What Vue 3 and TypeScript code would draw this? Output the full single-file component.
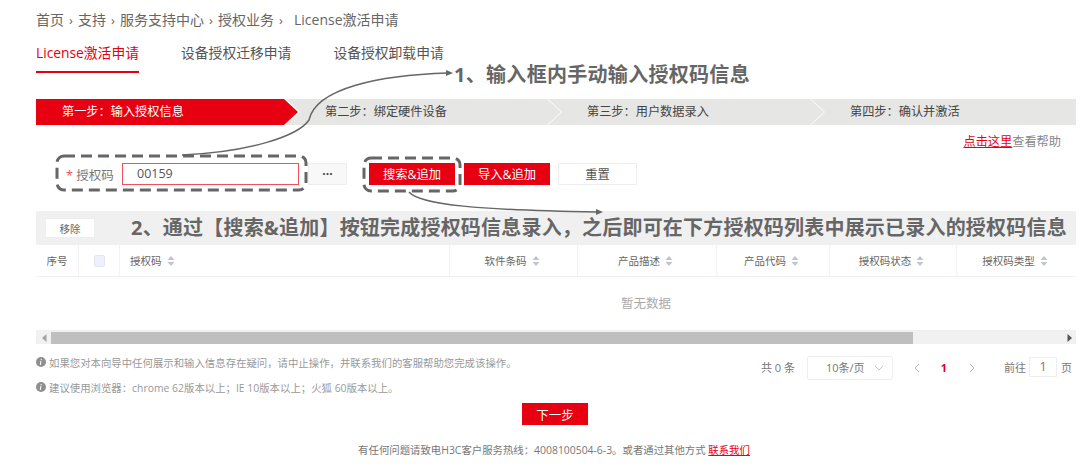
<script setup lang="ts">
const COLON = '\uFF1A'
const COMMA = '\uFF0C'
const SEMI = '\uFF1B'
const crumbs: string[] = ['首页', '支持', '服务支持中心', '授权业务']
const tabs: string[] = ['License激活申请', '设备授权迁移申请', '设备授权卸载申请']
const steps: string[] = [
  `第一步${COLON}输入授权信息`,
  `第二步${COLON}绑定硬件设备`,
  `第三步${COLON}用户数据录入`,
  `第四步${COLON}确认并激活`
]
const cols: string[] = ['软件条码', '产品描述', '产品代码', '授权码状态', '授权码类型']
const notes: string[] = [
  `如果您对本向导中任何展示和输入信息存在疑问${COMMA}请中止操作${COMMA}并联系我们的客服帮助您完成该操作。`,
  `建议使用浏览器${COLON}chrome 62版本以上${SEMI}IE 10版本以上${SEMI}火狐 60版本以上。`
]
const note2 = `2、通过【搜索&追加】按钮完成授权码信息录入${COMMA}之后即可在下方授权码列表中展示已录入的授权码信息`
const footText = `有任何问题请致电H3C客户服务热线${COLON}4008100504-6-3。或者通过其他方式 `
</script>

<template>
  <div class="page">
    <nav class="crumbs">
      <template v-for="c in crumbs" :key="c">
        <span>{{ c }}</span><span class="sep">›</span>
      </template>
      <span class="last">License激活申请</span>
    </nav>

    <div class="tabs">
      <span v-for="(t, i) in tabs" :key="t" class="tab" :class="{ on: i === 0 }">{{ t }}</span>
    </div>

    <div class="steps">
      <div v-for="(s, i) in steps" :key="s" class="step" :class="`s${i}`">{{ s }}</div>
    </div>

    <div class="help"><a class="red-link">点击这里</a>查看帮助</div>

    <div class="form">
      <label class="lbl"><i>*</i> 授权码</label>
      <div class="input">00159</div>
      <button class="more">···</button>
      <button class="btn red first">搜索&amp;追加</button>
      <button class="btn red second">导入&amp;追加</button>
      <button class="btn plain">重置</button>
    </div>

    <section class="table">
      <div class="toolbar">
        <button class="remove">移除</button>
        <strong class="note2">{{ note2 }}</strong>
      </div>
      <div class="head">
        <div class="cell center">序号</div>
        <div class="cell center"><span class="check"></span></div>
        <div class="cell left">授权码
          <svg class="sort" viewBox="0 0 8 12" width="8" height="12"><path d="M4 1 7.5 5H.5zM4 11 .5 7h7z" /></svg>
        </div>
        <div v-for="c in cols" :key="c" class="cell center shift">{{ c }}
          <svg class="sort" viewBox="0 0 8 12" width="8" height="12"><path d="M4 1 7.5 5H.5zM4 11 .5 7h7z" /></svg>
        </div>
      </div>
      <div class="empty">暂无数据</div>
      <div class="scroll">
        <svg class="sl" viewBox="0 0 5 8" width="5" height="8"><path d="M4.5 0v8L0 4z" /></svg>
        <div class="thumb"></div>
        <svg class="sr" viewBox="0 0 5 8" width="5" height="8"><path d="M.5 0v8L5 4z" /></svg>
      </div>
    </section>

    <div class="bottom">
      <div class="notes">
        <p v-for="n in notes" :key="n">
          <svg viewBox="0 0 10 10" width="10" height="10"><circle cx="5" cy="5" r="5" fill="#8f8f8f" /><path d="M5.9 2.1 5.6 3.2H4.5l.3-1.1zM5.4 4 4.8 7.9H3.8L4.4 4z" fill="#fff" /></svg>
          <span>{{ n }}</span>
        </p>
      </div>
      <div class="pager">
        <span class="total">共 0 条</span>
        <div class="select">10条/页
          <svg viewBox="0 0 10 6" width="10" height="6"><path d="M1 1l4 4 4-4" fill="none" stroke="#c0c4cc" /></svg>
        </div>
        <svg class="pg prev" viewBox="0 0 6 10" width="6" height="10"><path d="M5 1 1 5l4 4" fill="none" stroke="#b4b4b4" /></svg>
        <b class="cur">1</b>
        <svg class="pg nxt" viewBox="0 0 6 10" width="6" height="10"><path d="M1 1l4 4-4 4" fill="none" stroke="#b4b4b4" /></svg>
        <span class="goto">前往</span>
        <div class="pinput">1</div>
        <span class="ye">页</span>
      </div>
    </div>

    <button class="next">下一步</button>
    <p class="foot">{{ footText }}<a class="red-link">联系我们</a></p>

    <strong class="note1">1、输入框内手动输入授权码信息</strong>
    <svg class="overlay" viewBox="0 0 1080 471" width="1080" height="471">
      <g fill="none" stroke="#666" stroke-width="3" stroke-dasharray="11 6">
        <rect x="57" y="156" width="249" height="34" rx="7" />
        <rect x="364" y="158" width="96" height="33" rx="7" />
      </g>
      <g fill="none" stroke="#666" stroke-width="1.5">
        <path d="M182 155C250 152 298 136 309 120 316 88 380 75 448 73" />
        <path d="M409 192C420 205 480 210 597 212" />
      </g>
      <path d="M446 70l7 3-7 3zM596 209l7 3-7 3z" fill="#666" />
    </svg>
  </div>
</template>

<style scoped>
.page {
  position: relative;
  width: 1080px;
  height: 471px;
  overflow: hidden;
  padding: 10px 4px 0 36px;
  box-sizing: border-box;
  background: #fff;
  color: #666;
  font-family: "Open Sans", "Noto Sans CJK SC", sans-serif;
  font-size: 12px;
}
button { font-family: inherit; padding: 0; cursor: default; }
p { margin: 0; }

.crumbs { display: flex; height: 20px; line-height: 20px; font-size: 14px; color: #666; white-space: nowrap; }
.sep { width: 14px; text-align: center; font-size: 13px; }
.last { margin-left: 6px; }

.tabs { display: flex; gap: 42px; margin-top: 13px; font-size: 13.8px; line-height: 20px; }
.tab { padding-bottom: 8px; border-bottom: 2px solid transparent; color: #555; white-space: nowrap; }
.tab.on { color: #e60012; border-bottom-color: #e60012; }

.steps { display: flex; height: 26px; margin-top: 26px; line-height: 26px; font-size: 12.2px; color: #444; }
.step {
  flex: none;
  box-sizing: border-box;
  padding-left: 39px;
  background: #e6e6e4;
  clip-path: polygon(0 0, calc(100% - 14px) 0, 100% 50%, calc(100% - 14px) 100%, 0 100%, 14px 50%);
}
.s0 {
  width: 262px;
  padding-left: 26px;
  color: #fff;
  background: #e60012;
  clip-path: polygon(0 0, calc(100% - 14px) 0, 100% 50%, calc(100% - 14px) 100%, 0 100%);
  position: relative;
  z-index: 1;
}
.s1 { width: 275px; margin-left: -12px; }
.s2 { width: 276px; margin-left: -13px; }
.s3 { width: 265px; margin-left: -13px; clip-path: polygon(0 0, 100% 0, 100% 100%, 0 100%, 14px 50%); }

.help { height: 16px; margin-top: 9px; padding-right: 15px; line-height: 16px; text-align: right; font-size: 12.2px; color: #888; }
.red-link { color: #e60012; text-decoration: underline; }

.form { display: flex; align-items: center; height: 22px; margin-top: 13px; }
.lbl { width: 86px; padding-left: 30px; box-sizing: border-box; font-size: 12.5px; color: #777; white-space: nowrap; }
.lbl i { color: #e8505c; font-style: normal; font-weight: 400; }
.input {
  width: 177px; height: 22px; box-sizing: border-box; padding-left: 14px;
  border: 1px solid #f0505c; line-height: 20px; font-size: 12.5px; color: #555;
}
.more {
  width: 39px; height: 22px; margin-left: 9px; border: 1px solid #eee; background: #f8f8f8;
  color: #444; font-size: 12px; font-weight: 700; line-height: 18px;
}
.btn { height: 22px; box-sizing: border-box; font-size: 12.3px; border: 1px solid transparent; }
.red { background: #e60012; color: #fff; width: 86px; }
.first { margin-left: 22px; }
.second { margin-left: 9px; }
.plain { width: 79px; margin-left: 8px; background: #fff; border-color: #eee; color: #555; }

.table { margin-top: 26px; }
.toolbar { display: flex; align-items: center; height: 34px; padding-left: 9px; background: #f0f0f0; }
.remove { width: 50px; height: 20px; border: 1px solid #eee; background: #fff; color: #666; font-size: 10.5px; }
.note2 { margin-left: 36px; font-size: 20px; letter-spacing: .2px; line-height: 34px; color: #666; font-weight: 700; white-space: nowrap; }

.head {
  display: grid;
  grid-template-columns: 43px 41px 330px 128px 139px 113px 127px 119px;
  height: 32px;
  border-bottom: 1px solid #eef0f5;
  box-sizing: border-box;
  font-size: 10.5px;
  color: #666;
}
.cell { display: flex; align-items: center; gap: 5px; border-right: 1px solid #f2f3f7; white-space: nowrap; box-sizing: border-box; }
.cell:last-child { border-right: 0; }
.center { justify-content: center; }
.shift { padding-right: 3px; }
.left { padding-left: 10px; }
.check { width: 11px; height: 12px; background: #eef1fa; border: 1px solid #e2e6f0; border-radius: 2px; box-sizing: border-box; }
.sort { fill: #c0c4cc; }

.empty { height: 54px; line-height: 54px; text-align: center; font-size: 12.5px; color: #aaa; padding-left: 180px; box-sizing: border-box; border-bottom: 1px solid #eef0f5; }
.scroll { display: flex; align-items: center; height: 13px; background: #f1f1f1; }
.sl { margin-left: 6px; fill: #a3a3a3; }
.thumb { width: 862px; height: 12px; margin-left: 4px; background: #bfbfbf; }
.sr { margin-left: 154px; fill: #555; }

.bottom { display: flex; justify-content: space-between; height: 45px; margin-top: 8px; }
.notes { display: flex; flex-direction: column; gap: 5px; color: #999; font-size: 10.4px; }
.notes p { display: flex; align-items: center; gap: 3px; height: 20px; white-space: nowrap; }
.notes svg { flex: none; }

.pager { display: flex; align-items: flex-start; padding-top: 4px; font-size: 11px; color: #777; line-height: 24px; height: 24px; }
.total { width: 46px; }
.select {
  position: relative; width: 86px; height: 24px; box-sizing: border-box; padding-left: 18px;
  border: 1px solid #eee; border-radius: 2px; line-height: 22px;
}
.select svg { position: absolute; right: 8px; top: 8px; }
.pg { margin-top: 7px; }
.prev { margin-left: 21px; }
.cur { width: 10px; margin-left: 19px; text-align: center; color: #e60012; font-size: 11px; }
.nxt { margin-left: 20px; }
.goto { margin-left: 29px; }
.pinput { width: 28px; height: 20px; margin: 1px 0 0 3px; box-sizing: border-box; border: 1px solid #eee; text-align: center; line-height: 18px; font-size: 12.5px; }
.ye { margin: 0 4px 0 4px; }

.next {
  display: block; width: 66px; height: 22px; margin: 6px auto 0 486px;
  border: 0; background: #e60012; color: #fff; font-size: 12.5px;
}
.foot { margin-top: 17px; line-height: 16px; text-align: center; font-size: 10.4px; color: #777; padding-right: 4px; white-space: nowrap; }

.note1 { position: absolute; left: 454px; top: 60px; font-size: 20px; letter-spacing: .3px; line-height: 30px; font-weight: 700; color: #666; white-space: nowrap; }
.overlay { position: absolute; left: 0; top: 0; pointer-events: none; }
</style>

<style>
html, body { margin: 0; background: #fff; }
</style>
